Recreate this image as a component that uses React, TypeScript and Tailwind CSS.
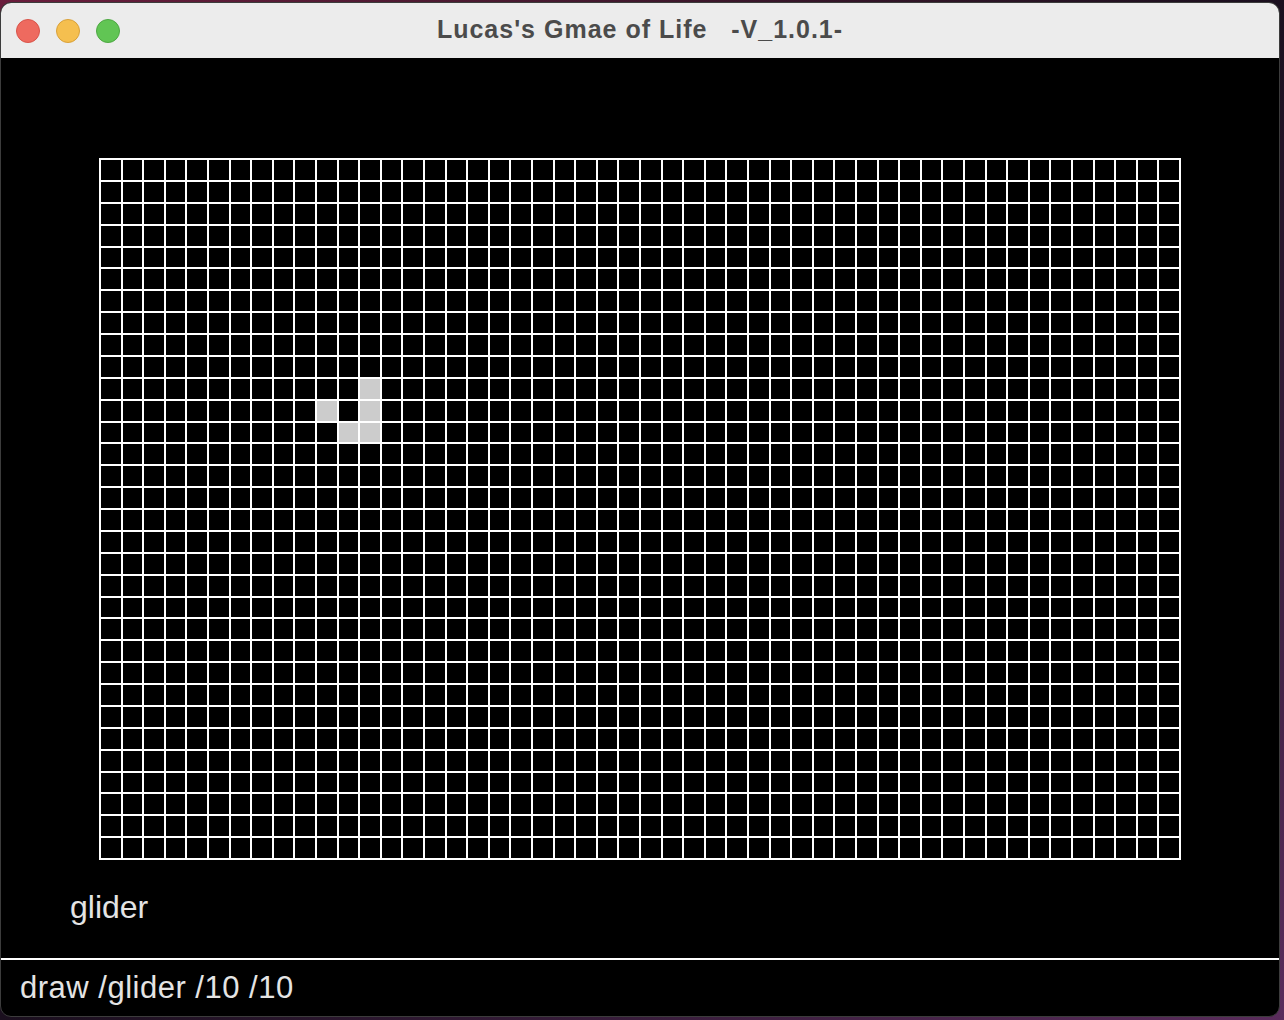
import React from "react";

const COLS = 50;
const ROWS = 32;

// glider cells, "col,row"
const alive = new Set(["12,10", "10,11", "12,11", "11,12", "12,12"]);

const Board: React.FC = () => {
  const cells = [];
  for (let r = 0; r < ROWS; r++) {
    for (let c = 0; c < COLS; c++) {
      const on = alive.has(`${c},${r}`);
      cells.push(<div key={`${c}-${r}`} className={on ? "bg-[#cccccc]" : "bg-black"} />);
    }
  }
  return (
    <div className="ml-[98px] grid h-[702px] w-[1082px] grid-cols-[repeat(50,1fr)] grid-rows-[repeat(32,1fr)] gap-[2px] bg-white p-[2px]">
      {cells}
    </div>
  );
};

const TrafficLights: React.FC = () => (
  <div className="flex items-center gap-[16px] pl-[15px]">
    <span className="h-[24px] w-[24px] rounded-full border border-[#d9544a] bg-[#ee6a5f]" />
    <span className="h-[24px] w-[24px] rounded-full border border-[#d9a13a] bg-[#f5bf4f]" />
    <span className="h-[24px] w-[24px] rounded-full border border-[#4ea843] bg-[#61c554]" />
  </div>
);

export default function App() {
  return (
    <div className="h-[1020px] w-[1284px] overflow-hidden bg-gradient-to-br from-[#6a1d3c] via-[#1a0f1e] to-[#5a2c5c] pt-[2px]">
      <div className="flex h-[1015px] w-[1280px] flex-col overflow-hidden rounded-[11px] border border-[#3c3c3c] bg-black">
        <div className="relative flex h-[55px] shrink-0 items-center bg-[#ececec]">
          <TrafficLights />
          <div
            className="absolute inset-0 flex items-center justify-center whitespace-pre pb-[2px] text-[25px] font-bold tracking-[1px] text-[#4b4b4b]"
            style={{ fontFamily: '"Liberation Sans", Arial, sans-serif' }}
          >
            {"Lucas's Gmae of Life   -V_1.0.1-"}
          </div>
        </div>
        <div
          className="flex flex-1 flex-col text-[#e4e4e4]"
          style={{ fontFamily: '"Liberation Sans", Arial, sans-serif' }}
        >
          <div className="pt-[100px]">
            <Board />
          </div>
          <div className="h-[98px] pl-[69px] pt-[29px] text-[32px] leading-[36px]">glider</div>
          <div className="h-[2px] bg-white" />
          <div className="pl-[19px] pt-[10px] text-[31px] leading-[36px] tracking-[0.5px]">draw /glider /10 /10</div>
        </div>
      </div>
    </div>
  );
}
